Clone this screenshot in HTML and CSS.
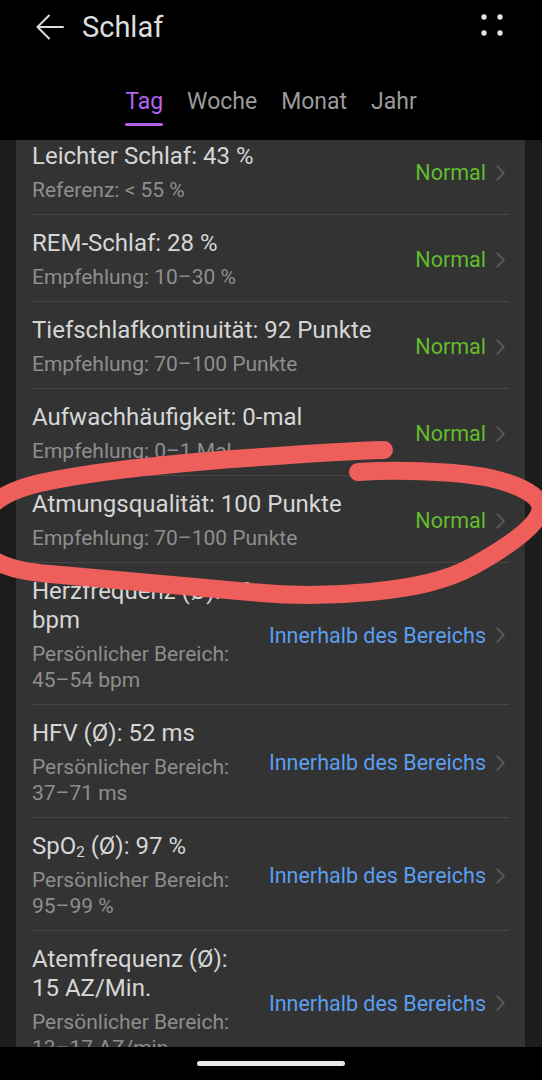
FILE: index.html
```html
<!DOCTYPE html>
<html lang="de">
<head>
<meta charset="utf-8">
<title>Schlaf</title>
<link rel="stylesheet" href="styles.css">
</head>
<body>
<div class="screen">
  <header class="appbar">
    <div class="topbar">
      <svg class="back" width="28" height="26" viewBox="0 0 28 26" aria-hidden="true">
        <path d="M27 13H2M13 1.5L1.5 13L13 24.5" fill="none" stroke="#dcdcdc" stroke-width="2" stroke-linecap="round" stroke-linejoin="round"/>
      </svg>
      <h1 class="title">Schlaf</h1>
      <svg class="more" width="22" height="22" viewBox="0 0 22 22" aria-hidden="true">
        <circle cx="3" cy="3" r="2.7" fill="#e6e6e6"/>
        <circle cx="19" cy="3" r="2.7" fill="#e6e6e6"/>
        <circle cx="3" cy="19" r="2.7" fill="#e6e6e6"/>
        <circle cx="19" cy="19" r="2.7" fill="#e6e6e6"/>
      </svg>
    </div>
    <nav class="tabs">
      <span class="tab active">Tag</span>
      <span class="tab">Woche</span>
      <span class="tab">Monat</span>
      <span class="tab">Jahr</span>
    </nav>
  </header>

  <main class="scroll">
    <section class="card">
      <div class="row">
        <div class="info"><div class="name">Leichter Schlaf: 43 %</div><div class="ref">Referenz: &lt; 55 %</div></div>
        <span class="status normal">Normal</span>
        <svg class="chev" width="9" height="16" viewBox="0 0 9 16"><path d="M1 1l7 7-7 7" fill="none" stroke="#5f5f5f" stroke-width="1.6" stroke-linecap="round" stroke-linejoin="round"/></svg>
      </div>
      <div class="row">
        <div class="info"><div class="name">REM-Schlaf: 28 %</div><div class="ref">Empfehlung: 10–30 %</div></div>
        <span class="status normal">Normal</span>
        <svg class="chev" width="9" height="16" viewBox="0 0 9 16"><path d="M1 1l7 7-7 7" fill="none" stroke="#5f5f5f" stroke-width="1.6" stroke-linecap="round" stroke-linejoin="round"/></svg>
      </div>
      <div class="row">
        <div class="info"><div class="name">Tiefschlafkontinuität: 92 Punkte</div><div class="ref">Empfehlung: 70–100 Punkte</div></div>
        <span class="status normal">Normal</span>
        <svg class="chev" width="9" height="16" viewBox="0 0 9 16"><path d="M1 1l7 7-7 7" fill="none" stroke="#5f5f5f" stroke-width="1.6" stroke-linecap="round" stroke-linejoin="round"/></svg>
      </div>
      <div class="row">
        <div class="info"><div class="name">Aufwachhäufigkeit: 0-mal</div><div class="ref">Empfehlung: 0–1 Mal</div></div>
        <span class="status normal">Normal</span>
        <svg class="chev" width="9" height="16" viewBox="0 0 9 16"><path d="M1 1l7 7-7 7" fill="none" stroke="#5f5f5f" stroke-width="1.6" stroke-linecap="round" stroke-linejoin="round"/></svg>
      </div>
      <div class="row">
        <div class="info"><div class="name">Atmungsqualität: 100 Punkte</div><div class="ref">Empfehlung: 70–100 Punkte</div></div>
        <span class="status normal">Normal</span>
        <svg class="chev" width="9" height="16" viewBox="0 0 9 16"><path d="M1 1l7 7-7 7" fill="none" stroke="#5f5f5f" stroke-width="1.6" stroke-linecap="round" stroke-linejoin="round"/></svg>
      </div>
      <div class="row">
        <div class="info"><div class="name">Herzfrequenz (Ø): 49 bpm</div><div class="ref">Persönlicher Bereich: 45–54 bpm</div></div>
        <span class="status range">Innerhalb des Bereichs</span>
        <svg class="chev" width="9" height="16" viewBox="0 0 9 16"><path d="M1 1l7 7-7 7" fill="none" stroke="#5f5f5f" stroke-width="1.6" stroke-linecap="round" stroke-linejoin="round"/></svg>
      </div>
      <div class="row">
        <div class="info"><div class="name">HFV (Ø): 52 ms</div><div class="ref">Persönlicher Bereich: 37–71 ms</div></div>
        <span class="status range">Innerhalb des Bereichs</span>
        <svg class="chev" width="9" height="16" viewBox="0 0 9 16"><path d="M1 1l7 7-7 7" fill="none" stroke="#5f5f5f" stroke-width="1.6" stroke-linecap="round" stroke-linejoin="round"/></svg>
      </div>
      <div class="row">
        <div class="info"><div class="name">SpO<sub class="low">2</sub> (Ø): 97 %</div><div class="ref">Persönlicher Bereich: 95–99 %</div></div>
        <span class="status range">Innerhalb des Bereichs</span>
        <svg class="chev" width="9" height="16" viewBox="0 0 9 16"><path d="M1 1l7 7-7 7" fill="none" stroke="#5f5f5f" stroke-width="1.6" stroke-linecap="round" stroke-linejoin="round"/></svg>
      </div>
      <div class="row">
        <div class="info"><div class="name">Atemfrequenz (Ø): 15 AZ/Min.</div><div class="ref">Persönlicher Bereich: 13–17 AZ/min</div></div>
        <span class="status range">Innerhalb des Bereichs</span>
        <svg class="chev" width="9" height="16" viewBox="0 0 9 16"><path d="M1 1l7 7-7 7" fill="none" stroke="#5f5f5f" stroke-width="1.6" stroke-linecap="round" stroke-linejoin="round"/></svg>
      </div>
    </section>
  </main>

  <footer class="navbar"><span class="pill"></span></footer>

  <svg class="annotation" width="542" height="1080" viewBox="0 0 542 1080" aria-hidden="true">
    <path d="M358,472 C390,470 450,470 490,478 C520,485 545,497 540,512 C535,528 505,548 475,565 C445,582 410,588 370,592 C330,596 290,596 250,592 C190,587 110,579 50,574 C10,571 -22,560 -22,535 C-22,510 0,492 40,483 C90,472 150,466 220,460 C290,455 340,451 384,450" fill="none" stroke="#ee5e5a" stroke-width="18" stroke-linecap="round" stroke-linejoin="round"/>
  </svg>
</div>
</body>
</html>
```

FILE: styles.css
```css
* { box-sizing: border-box; }

body {
  margin: 0;
  background: #000;
  font-family: Roboto, "Noto Sans", "Liberation Sans", sans-serif;
}

.screen {
  position: relative;
  width: 542px;
  height: 1080px;
  display: flex;
  flex-direction: column;
  overflow: hidden;
  background: #000;
}

/* ---------- header ---------- */
.appbar {
  background: #000;
  flex: 0 0 auto;
  position: relative;
  z-index: 2;
}

.topbar {
  height: 52px;
  padding: 2px 39px 0 36px;
  display: flex;
  align-items: center;
}

.back { flex: 0 0 auto; }

.title {
  margin: 0 0 0 18px;
  flex: 1;
  font-size: 29px;
  font-weight: 400;
  color: #dedede;
}

.more { flex: 0 0 auto; margin-top: -4px; }

.tabs {
  display: flex;
  justify-content: center;
  gap: 24px;
  padding: 36px 0 14px;
}

.tab {
  display: flex;
  flex-direction: column;
  font-size: 23px;
  line-height: 28px;
  color: #9a9a9a;
}

.tab::after {
  content: "";
  display: block;
  height: 3px;
  margin-top: 7px;
  border-radius: 2px;
  background: transparent;
}

.tab.active { color: #b462ee; }
.tab.active::after { background: #b462ee; }

/* ---------- list ---------- */
.scroll {
  flex: 1;
  min-height: 0;
  overflow: hidden;
  background: #1c1c1c;
  padding: 0 17px 0 16px;
}

.card {
  margin-top: -12px;
  background: #333333;
  padding: 0 16px;
}

.row {
  display: flex;
  align-items: center;
  padding: 14px 4px 11px 0;
  border-bottom: 1px solid #464646;
}

.info {
  flex: 1;
  min-width: 0;
  margin-right: 12px;
}

.name {
  font-size: 24px;
  line-height: 29px;
  color: #d6d6d6;
}

.low {
  font-size: 15px;
  line-height: 0;
  vertical-align: -3px;
}

.ref {
  margin-top: 6px;
  font-size: 21px;
  line-height: 26px;
  color: #8e8e8e;
}

.status {
  flex: 0 0 auto;
  font-size: 21.5px;
  white-space: nowrap;
}

.status.normal { color: #62bc2b; }
.status.range { color: #5b9ef0; }

.chev {
  flex: 0 0 auto;
  margin-left: 10px;
}

/* ---------- bottom nav ---------- */
.navbar {
  flex: 0 0 33px;
  background: #000;
  display: flex;
  justify-content: center;
  padding-top: 14px;
}

.pill {
  width: 148px;
  height: 5px;
  border-radius: 3px;
  background: #e8e8e8;
}

/* ---------- hand-drawn marker overlay ---------- */
.annotation {
  position: absolute;
  left: 0;
  top: 0;
  pointer-events: none;
  z-index: 5;
}
```
